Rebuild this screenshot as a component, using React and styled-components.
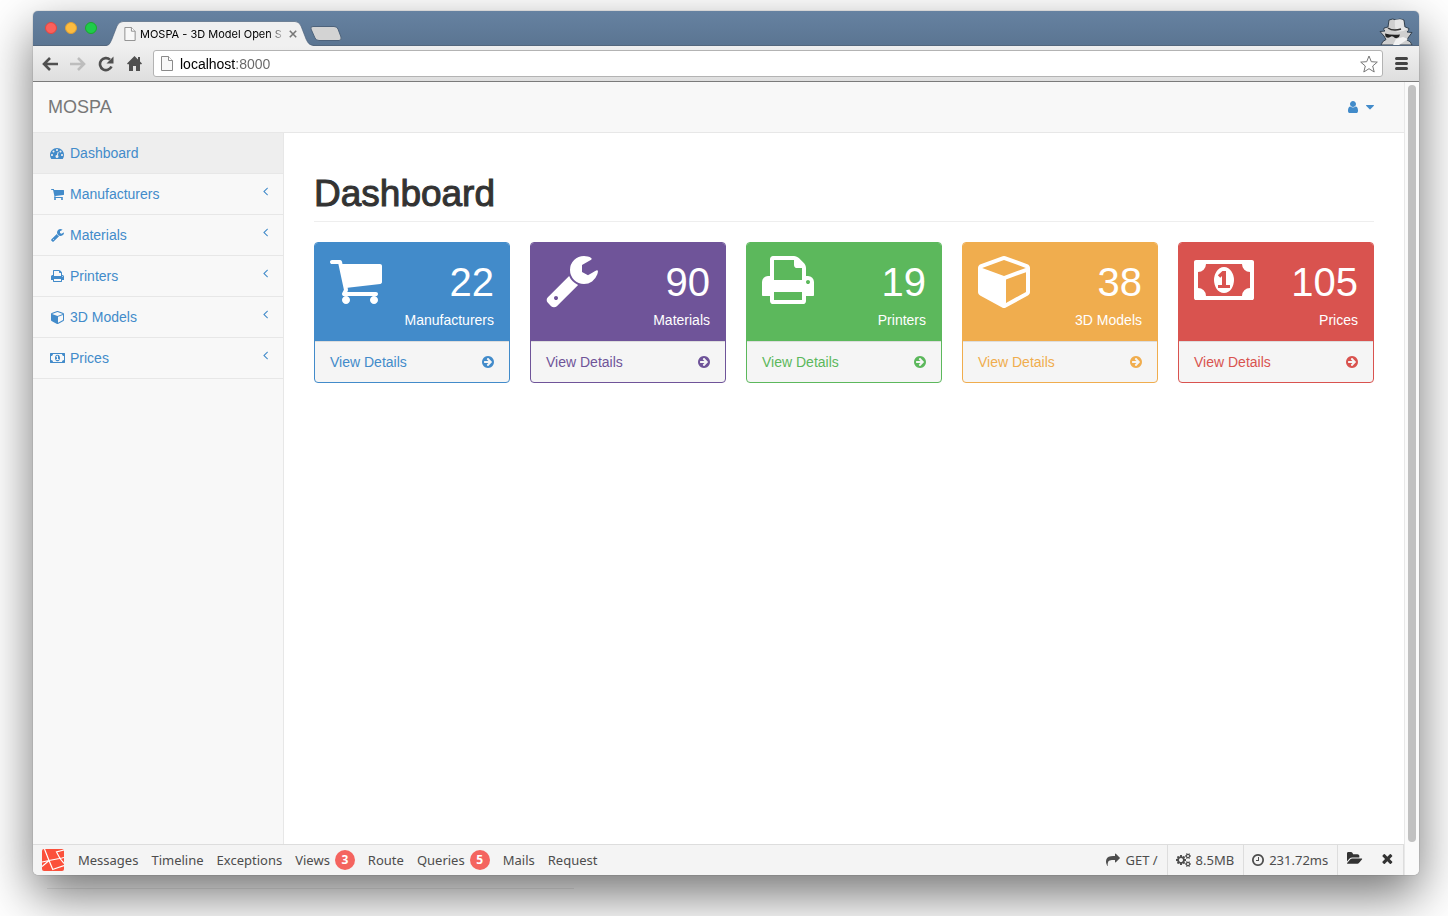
import React from "react";
import styled, { createGlobalStyle } from "styled-components";

const sans = '"Liberation Sans", Arial, sans-serif';
const blue = "#428bca";

const GlobalStyle = createGlobalStyle`
  *, *::before, *::after { box-sizing: border-box; }
  body { margin: 0; background: #fff; color: #333; font: 14px/20px ${sans}; overflow: hidden; }
  a { text-decoration: none; color: inherit; }
  button { border: 0; padding: 0; margin: 0; background: none; font: inherit; color: inherit; cursor: pointer; }
  svg { display: block; flex: none; }
`;

// Each glyph: left edge and advance width in a 1792-unit em, then its outline.
const GLYPHS = {
  cart: [64, 1664, "M704 1536q0 52-38 90t-90 38-90-38-38-90 38-90 90-38 90 38 38 90zm896 0q0 52-38 90t-90 38-90-38-38-90 38-90 90-38 90 38 38 90zm128-1088v512q0 24-16.5 42.5t-40.5 21.5l-1044 122q13 60 13 70 0 16-24 64h920q26 0 45 19t19 45-19 45-45 19h-1024q-26 0-45-19t-19-45q0-11 8-31.5t16-36 21.5-40 15.5-29.5l-177-823h-204q-26 0-45-19t-19-45 19-45 45-19h256q16 0 28.5 6.5t19.5 15.5 13 24.5 8 26 5.5 29.5 4.5 26h1201q26 0 45 19t19 45z"],
  wrench: [64, 1664, "M448 1472q0-26-19-45t-45-19-45 19-19 45 19 45 45 19 45-19 19-45zm644-420l-682 682q-37 37-90 37-52 0-91-37l-106-108q-38-36-38-90 0-53 38-91l681-681q39 98 114.5 173.5t173.5 114.5zm634-435q0 39-23 106-47 134-164.5 217.5t-258.5 83.5q-185 0-316.5-131.5t-131.5-316.5 131.5-316.5 316.5-131.5q58 0 121.5 16.5t107.5 46.5q16 11 16 28t-16 28l-293 169v224l193 107q5-3 79-48.5t135.5-81 70.5-35.5q15 0 23.5 10t8.5 25z"],
  print: [64, 1664, "M448 1536h896v-256h-896v256zm0-640h896v-384h-160q-40 0-68-28t-28-68v-160h-640v640zm1152 64q0-26-19-45t-45-19-45 19-19 45 19 45 45 19 45-19 19-45zm128 0v416q0 13-9.5 22.5t-22.5 9.5h-224v160q0 40-28 68t-68 28h-960q-40 0-68-28t-28-68v-160h-224q-13 0-22.5-9.5t-9.5-22.5v-416q0-79 56.5-135.5t135.5-56.5h64v-544q0-40 28-68t68-28h672q40 0 88 20t76 48l152 152q28 28 48 76t20 88v256h64q79 0 135.5 56.5t56.5 135.5z"],
  cube: [64, 1664, "M960 1629l640-349v-636l-640 233v752zm-64-865l698-254-698-254-698 254zm832-252v768q0 35-18 65t-49 47l-704 384q-28 16-61 16t-61-16l-704-384q-31-17-49-47t-18-65v-768q0-40 23-73t61-47l704-256q22-8 44-8t44 8l704 256q38 14 61 47t23 73z"],
  money: [0, 1920, "M768 1152h384v-96h-128v-448h-114l-148 137 77 80q42-37 55-57h2v288h-128v96zm512-256q0 70-21 142t-59.5 134-101.5 101-138 39-138-39-101.5-101-59.5-134-21-142 21-142 59.5-134 101.5-101 138-39 138 39 101.5 101 59.5 134 21 142zm512 256v-512q-106 0-181-75t-75-181h-1152q0 106-75 181t-181 75v512q106 0 181 75t75 181h1152q0-106 75-181t181-75zm128-832v1152q0 26-19 45t-45 19h-1792q-26 0-45-19t-19-45v-1152q0-26 19-45t45-19h1792q26 0 45 19t19 45z"],
  gauge: [0, 1792, "M384 1152q0-53-37.5-90.5t-90.5-37.5-90.5 37.5-37.5 90.5 37.5 90.5 90.5 37.5 90.5-37.5 37.5-90.5zm192-448q0-53-37.5-90.5t-90.5-37.5-90.5 37.5-37.5 90.5 37.5 90.5 90.5 37.5 90.5-37.5 37.5-90.5zm428 481l101-382q6-26-7.5-48.5t-38.5-29.5-48 6.5-30 39.5l-101 382q-60 5-107 43.5t-63 98.5q-20 77 20 146t117 89 146-20 89-117q16-60-6-117t-72-91zm660-33q0-53-37.5-90.5t-90.5-37.5-90.5 37.5-37.5 90.5 37.5 90.5 90.5 37.5 90.5-37.5 37.5-90.5zm-640-640q0-53-37.5-90.5t-90.5-37.5-90.5 37.5-37.5 90.5 37.5 90.5 90.5 37.5 90.5-37.5 37.5-90.5zm448 192q0-53-37.5-90.5t-90.5-37.5-90.5 37.5-37.5 90.5 37.5 90.5 90.5 37.5 90.5-37.5 37.5-90.5zm320 448q0 261-141 483-19 29-54 29h-1402q-35 0-54-29-141-221-141-483 0-182 71-348t191-286 286-191 348-71 348 71 286 191 191 286 71 348z"],
  user: [256, 1280, "M1536 1399q0 109-62.5 187t-150.5 78h-854q-88 0-150.5-78t-62.5-187q0-85 8.5-160.5t31.5-152 58.5-131 94-89 134.5-34.5q131 128 313 128t313-128q76 0 134.5 34.5t94 89 58.5 131 31.5 152 8.5 160.5zm-256-887q0 159-112.5 271.5t-271.5 112.5-271.5-112.5-112.5-271.5 112.5-271.5 271.5-112.5 271.5 112.5 112.5 271.5z"],
  caret: [384, 1024, "M1408 704q0 26-19 45l-448 448q-19 19-45 19t-45-19l-448-448q-19-19-19-45t19-45 45-19h896q26 0 45 19t19 45z"],
  angle: [576, 640, "M1203 544q0 13-10 23l-393 393 393 393q10 10 10 23t-10 23l-50 50q-10 10-23 10t-23-10l-466-466q-10-10-10-23t10-23l466-466q10-10 23-10t23 10l50 50q10 10 10 23z"],
  arrow: [128, 1536, "M1413 896q0-27-18-45l-91-91-362-362q-18-18-45-18t-45 18l-91 91q-18 18-18 45t18 45l189 189h-502q-26 0-45 19t-19 45v128q0 26 19 45t45 19h502l-189 189q-18 18-18 45t18 45l91 91q18 18 45 18t45-18l362-362 91-91q18-18 18-45zm251 0q0 209-103 385.5t-279.5 279.5-385.5 103-385.5-103-279.5-279.5-103-385.5 103-385.5 279.5-279.5 385.5-103 385.5 103 279.5 279.5 103 385.5z"],
  share: [0, 1792, "M1792 640q0 26-19 45l-512 512q-19 19-45 19t-45-19-19-45v-256h-224q-98 0-175.5 6t-154 21.5-133 42.5-105.5 69.5-80 101-48.5 138.5-17.5 181q0 55 5 123 0 6 2.5 23.5t2.5 26.5q0 15-8.5 25t-23.5 10q-16 0-28-17-7-9-13-22t-13.5-30-10.5-24q-127-285-127-451 0-199 53-333 162-403 875-403h224v-256q0-26 19-45t45-19 45 19l512 512q19 19 19 45z"],
  cogs: [0, 1920, "M896 896q0-106-75-181t-181-75-181 75-75 181 75 181 181 75 181-75 75-181zm768 512q0-52-38-90t-90-38-90 38-38 90q0 53 37.5 90.5t90.5 37.5 90.5-37.5 37.5-90.5zm0-1024q0-52-38-90t-90-38-90 38-38 90q0 53 37.5 90.5t90.5 37.5 90.5-37.5 37.5-90.5zm-384 421v185q0 10-7 19.5t-16 10.5l-155 24q-11 35-32 76 34 48 90 115 7 11 7 20 0 12-7 19-23 30-82.5 89.5t-78.5 59.5q-11 0-21-7l-115-90q-37 19-77 31-11 108-23 155-7 24-30 24h-186q-11 0-20-7.5t-10-17.5l-23-153q-34-10-75-31l-118 89q-7 7-20 7-11 0-21-8-144-133-144-160 0-9 7-19 10-14 41-53t47-61q-23-44-35-82l-152-24q-10-1-17-9.5t-7-19.5v-185q0-10 7-19.5t16-10.5l155-24q11-35 32-76-34-48-90-115-7-11-7-20 0-12 7-20 22-30 82-89t79-59q11 0 21 7l115 90q34-18 77-32 11-108 23-154 7-24 30-24h186q11 0 20 7.5t10 17.5l23 153q34 10 75 31l118-89q8-7 20-7 11 0 21 8 144 133 144 160 0 8-7 19-12 16-42 54t-45 60q23 48 34 82l152 23q10 2 17 10.5t7 19.5zm640 533v140q0 16-149 31-12 27-30 52 51 113 51 138 0 4-4 7-122 71-124 71-8 0-46-47t-52-68q-20 2-30 2t-30-2q-14 21-52 68t-46 47q-2 0-124-71-4-3-4-7 0-25 51-138-18-25-30-52-149-15-149-31v-140q0-16 149-31 13-29 30-52-51-113-51-138 0-4 4-7 4-2 35-20t59-34 30-16q8 0 46 46.500t52 67.500q20-2 30-2t30 2q51-71 92-112l6-2q4 0 124 70 4 3 4 7 0 25-51 138 17 23 30 52 149 15 149 31zm0-1024v140q0 16-149 31-12 27-30 52 51 113 51 138 0 4-4 7-122 71-124 71-8 0-46-47t-52-68q-20 2-30 2t-30-2q-14 21-52 68t-46 47q-2 0-124-71-4-3-4-7 0-25 51-138-18-25-30-52-149-15-149-31v-140q0-16 149-31 13-29 30-52-51-113-51-138 0-4 4-7 4-2 35-20t59-34 30-16q8 0 46 46.500t52 67.500q20-2 30-2t30 2q51-71 92-112l6-2q4 0 124 70 4 3 4 7 0 25-51 138 17 23 30 52 149 15 149 31z"],
  clock: [128, 1536, "M1024 544v448q0 14-9 23t-23 9h-320q-14 0-23-9t-9-23v-64q0-14 9-23t23-9h224v-352q0-14 9-23t23-9h64q14 0 23 9t9 23zm416 352q0-148-73-273t-198-198-273-73-273 73-198 198-73 273 73 273 198 198 273 73 273-73 198-198 73-273zm224 0q0 209-103 385.5t-279.5 279.5-385.5 103-385.5-103-279.5-279.5-103-385.5 103-385.5 279.5-279.5 385.5-103 385.5 103 279.5 279.5 103 385.5z"],
  folder: [0, 1920, "M1815 952q0 31-31 66l-336 396q-43 51-120.5 86.5t-143.5 35.5h-1088q-34 0-60.5-13t-26.5-43q0-31 31-66l336-396q43-51 120.5-86.5t143.5-35.5h1088q34 0 60.5 13t26.5 43zm-343-344v160h-832q-94 0-197 47.5t-164 119.5l-337 396-5 6q0-4-.5-12.5t-.5-12.5v-960q0-92 66-158t158-66h320q92 0 158 66t66 158v32h544q92 0 158 66t66 158z"],
  times: [256, 1280, "M1490 1322q0 40-28 68l-136 136q-28 28-68 28t-68-28l-294-294-294 294q-28 28-68 28t-68-28l-136-136q-28-28-28-68t28-68l294-294-294-294q-28-28-28-68t28-68l136-136q28-28 68-28t68 28l294 294 294-294q28-28 68-28t68 28l136 136q28 28 28 68t-28 68l-294 294 294 294q28 28 28 68z"],
};

function Glyph({ name, size = 14 }) {
  const [left, width, path] = GLYPHS[name];
  return (
    <svg width={(size * width) / 1792} height={size} viewBox={`${left} 0 ${width} 1792`} fill="currentColor" aria-hidden="true">
      <path d={path} />
    </svg>
  );
}

const Desktop = styled.div`
  min-height: 100vh;
  padding: 11px 29px 0 33px;
  background: #fff;
`;
const BrowserWindow = styled.div`
  display: flex;
  flex-direction: column;
  height: calc(100vh - 52px);
  border-radius: 5px;
  overflow: hidden;
  background: #f8f8f8;
  box-shadow: 0 0 1px rgba(0, 0, 0, 0.6), 0 20px 50px rgba(0, 0, 0, 0.55);
`;
const PageRule = styled.hr`
  width: 38%;
  height: 1px;
  border: 0;
  margin: 13px 0 0 14px;
  background: rgba(0, 0, 0, 0.07);
`;

const TabStrip = styled.div`
  display: flex;
  align-items: flex-end;
  height: 35px;
  padding: 0 6px 0 12px;
  background: linear-gradient(#6682a1, #5b7592);
  border-bottom: 1px solid #54677d;
`;
const Lights = styled.div`
  display: flex;
  gap: 8px;
  align-self: center;
  margin-right: 9px;
`;
const Light = styled.button.attrs({ type: "button" })`
  width: 12px;
  height: 12px;
  border-radius: 50%;
  background: ${(p) => p.$color};
  border: 1px solid ${(p) => p.$edge};
`;
const Tab = styled.div`
  position: relative;
  display: flex;
  align-items: center;
  width: 208px;
  height: 25px;
  margin: 0 -3px -1px 0;
  padding: 0 17px 0 18px;
  color: #000;
  font: 11px/16px Inter, sans-serif;
`;
const TabShape = styled.svg`
  position: absolute;
  inset: 0;
`;
const TabTitle = styled.span`
  position: relative;
  flex: 1;
  min-width: 0;
  margin: 0 3px 0 4px;
  white-space: nowrap;
  mask-image: linear-gradient(to right, #000 88%, transparent 100%);
`;
const TabIcon = styled.span`
  position: relative;
`;
const TabClose = styled.button.attrs({ type: "button" })`
  position: relative;
  color: #777;
`;
const Incognito = styled.div`
  margin-left: auto;
`;

const Toolbar = styled.div`
  display: flex;
  align-items: center;
  height: 36px;
  padding: 0 11px 0 3px;
  background: linear-gradient(#f0f0f0, #dedede);
  border-bottom: 1px solid #7b7b7b;
`;
const ToolButton = styled.button.attrs({ type: "button" })`
  display: flex;
  justify-content: center;
  width: 28px;
  color: ${(p) => (p.$faded ? "#bdbdbd" : "#505050")};
`;
const Menu = styled(ToolButton)`
  width: 14px;
  margin-left: 11px;
`;
const Omnibox = styled.label`
  display: flex;
  flex: 1;
  align-items: center;
  gap: 7px;
  height: 27px;
  margin-left: 5px;
  padding: 0 4px 0 7px;
  background: #fff;
  border: 1px solid #b3b3b3;
  border-radius: 3px;
`;
const Address = styled.input`
  flex: 1;
  min-width: 0;
  border: 0;
  padding: 0;
  outline: 0;
  font: 14px/20px ${sans};
  color: transparent;
  background: linear-gradient(to right, #000 56px, #666 56px);
  background-clip: text;
`;

const Viewport = styled.div`
  display: flex;
  flex: 1;
  min-height: 0;
`;
const Page = styled.div`
  display: flex;
  flex: 1;
  flex-direction: column;
  min-width: 0;
`;
const Scrollbar = styled.div`
  width: 15px;
  padding: 3px 3px 33px;
  background: #fafafa;
  border-left: 1px solid #e8e8e8;
`;
const Thumb = styled.div`
  width: 8px;
  height: 100%;
  border-radius: 4px;
  background: #c1c1c1;
`;

const Navbar = styled.header`
  display: flex;
  align-items: center;
  justify-content: space-between;
  height: 51px;
  padding: 0 30px 0 15px;
  background: #f8f8f8;
  border-bottom: 1px solid #e7e7e7;
`;
const Brand = styled.a`
  color: #777;
  font-size: 18px;
`;
const UserMenu = styled.button.attrs({ type: "button" })`
  display: flex;
  gap: 8px;
  color: ${blue};
`;
const Body = styled.div`
  display: flex;
  flex: 1;
  min-height: 0;
`;
const Sidebar = styled.nav`
  width: 251px;
  background: #f8f8f8;
  border-right: 1px solid #e7e7e7;
`;
const SideLink = styled.a`
  display: flex;
  align-items: center;
  height: 41px;
  padding: 0 15px;
  color: ${blue};
  background: ${(p) => (p.$active ? "#eee" : "none")};
  border-bottom: 1px solid #e7e7e7;
`;
const SideIcon = styled.span`
  display: flex;
  justify-content: center;
  width: 18px;
  margin-right: 4px;
`;
const Chevron = styled.span`
  margin: 0 0 6px auto;
`;

const Main = styled.main`
  flex: 1;
  min-width: 0;
  padding: 41px 30px 0;
  background: #fff;
`;
const Title = styled.h1`
  margin: 0 0 20px;
  padding-bottom: 7px;
  border-bottom: 1px solid #eee;
  font-size: 37px;
  line-height: 40px;
  font-weight: 400;
  -webkit-text-stroke: 1px #333;
`;
const Cards = styled.div`
  display: grid;
  grid-template-columns: repeat(5, 1fr);
  gap: 20px;
`;
const Card = styled.section`
  color: ${(p) => p.$color};
  background: #f5f5f5;
  border: 1px solid;
  border-radius: 4px;
  overflow: hidden;
`;
const CardTop = styled.div`
  display: flex;
  justify-content: space-between;
  height: 98px;
  padding: 9px 15px;
  background: ${(p) => p.$color};
`;
const CardFigures = styled.div`
  color: #fff;
  text-align: right;
`;
const CardIcon = styled.div`
  color: #fff;
`;
const Count = styled.div`
  padding-top: 8px;
  font-size: 40px;
  line-height: 44px;
`;
const Label = styled.div`
  padding-top: 6px;
`;
const Details = styled.a`
  display: flex;
  align-items: center;
  justify-content: space-between;
  height: 41px;
  padding: 0 15px;
  border-top: 1px solid #ddd;
`;

const DebugBar = styled.footer`
  display: flex;
  align-items: stretch;
  gap: 1px;
  height: 31px;
  padding: 0 0 0 9px;
  background: #f4f4f4;
  border-top: 1px solid #ddd;
  color: #4d4d4d;
  font: 13px/20px "Noto Sans", sans-serif;
`;
const Logo = styled.div`
  align-self: center;
  margin-right: 7px;
`;
const DebugTab = styled.button.attrs({ type: "button" })`
  display: flex;
  align-items: center;
  gap: 5px;
  padding: 0 6px;
`;
const Badge = styled.span`
  width: 20px;
  border-radius: 10px;
  background: #f4645f;
  color: #fff;
  font-weight: 700;
  font-size: 12px;
  text-align: center;
`;
const Stat = styled.span`
  display: flex;
  align-items: center;
  gap: 5px;
  padding: 0 9px 0 8px;
  border-right: 1px solid #ddd;
`;
const Stats = styled.div`
  display: flex;
  margin-left: auto;
`;
const DebugActions = styled.div`
  display: flex;
  align-items: center;
  gap: 19px;
  padding: 0 10px 4px 9px;
  border-right: 1px solid #ddd;
  color: #333;
`;

const PageIcon = ({ size = 15 }) => (
  <svg width="12" height={size} viewBox="0 0 12 15" fill="#f8f8f8" stroke="#8a8a8a">
    <path d="M.5 .5h7l4 4v10H.5z" />
    <path d="M7.5 .5v4h4" fill="#fff" />
  </svg>
);

const SECTIONS = [
  ["Manufacturers", "cart", 22, "#428bca"],
  ["Materials", "wrench", 90, "#6f5499"],
  ["Printers", "print", 19, "#5cb85c"],
  ["3D Models", "cube", 38, "#f0ad4e"],
  ["Prices", "money", 105, "#d9534f"],
];
const DEBUG_TABS = [
  ["Messages"], ["Timeline"], ["Exceptions"], ["Views", 3], ["Route"], ["Queries", 5], ["Mails"], ["Request"],
];

export default function App() {
  return (
    <Desktop>
      <GlobalStyle />
      <BrowserWindow>
        <TabStrip>
          <Lights>
            <Light $color="#fc605b" $edge="#e2463f" aria-label="Close window" />
            <Light $color="#fdbc40" $edge="#e0a032" aria-label="Minimize window" />
            <Light $color="#1fcb4b" $edge="#1aab29" aria-label="Zoom window" />
          </Lights>
          <Tab>
            <TabShape width="208" height="25" viewBox="0 0 208 25">
              <path d="M0 25C4 24 4 22 6 18L11 5Q13 .5 17 .5H189Q193 .5 195 5L200 18C202 22 203 24 208 25Z" fill="#f0f0f0" />
              <path d="M0 24.5C4 24 4 22 6 18L11 5Q13 .5 17 .5H189Q193 .5 195 5L200 18C202 22 203 24 208 24.5" fill="none" stroke="#495e77" strokeOpacity=".6" />
            </TabShape>
            <TabIcon><PageIcon size={14} /></TabIcon>
            <TabTitle>MOSPA - 3D Model Open S</TabTitle>
            <TabClose aria-label="Close tab">
              <svg width="8" height="8" viewBox="0 0 8 8" stroke="currentColor" strokeWidth="1.6"><path d="M.8 .8l6.4 6.4M7.2 .8L.8 7.2" /></svg>
            </TabClose>
          </Tab>
          <ToolButton aria-label="New tab">
            <svg width="33" height="24" viewBox="0 0 33 24">
              <path d="M4 5.5H25Q28 5.5 29 8L32 16Q33 19.500 30 19.500H10Q7 19.500 6 17L2 8Q1 5.500 4 5.500Z" fill="#d3d3d3" stroke="#4d627b" />
            </svg>
          </ToolButton>
          <Incognito>
            <svg width="34" height="28" viewBox="0 0 34 28">
              <path d="M2 28Q3 24 7 22.500L5 19L1 14.500L6 14Q4 13 5 11L9 10L10 3Q14 1 17 3Q21 1 25 3L26 10L30 11.500Q30 13.500 28 15L33 15.500L29 21L28 23Q32 24 33 28Z" fill="#cfcfcf" stroke="#33414f" />
              <path d="M16 3Q21 1.500 24 3L25 10L29 12Q24 15 18 15Q15 10 16 3Z" fill="#e6e6e6" />
              <path d="M9 11Q14 14.500 22 12" stroke="#333" strokeWidth="1.500" fill="none" />
              <path d="M6 16.500Q13 18.500 21 17.500L20 20Q17 22.500 14 19.500L12.500 19.300Q9 22 6.500 19.500Z" fill="#222" />
              <path d="M14 28L17 22L24 20L29 22L20 28Z" fill="#f2f2f2" />
            </svg>
          </Incognito>
        </TabStrip>
        <Toolbar>
          <ToolButton aria-label="Back">
            <svg width="16" height="14" viewBox="0 0 16 14" fill="none" stroke="currentColor" strokeWidth="2.6"><path d="M8 1L2 7l6 6M2 7h14" /></svg>
          </ToolButton>
          <ToolButton $faded aria-label="Forward">
            <svg width="16" height="14" viewBox="0 0 16 14" fill="none" stroke="currentColor" strokeWidth="2.6"><path d="M8 1l6 6-6 6M14 7H0" /></svg>
          </ToolButton>
          <ToolButton aria-label="Reload">
            <svg width="16" height="16" viewBox="0 0 16 16" fill="none" stroke="currentColor" strokeWidth="2.6"><path d="M13.5 10.500A6 6 0 1 1 12 3.600" /><path d="M15.500 .5v7h-7z" fill="currentColor" stroke="none" /></svg>
          </ToolButton>
          <ToolButton aria-label="Home">
            <svg width="15" height="15" viewBox="0 0 15 15" fill="currentColor"><path d="M7.500 0L0 7.500l1 1L2 8v7h4v-5h3v5h4V8l1 .5 1-1-2-2V1h-2v2.500z" /></svg>
          </ToolButton>
          <Omnibox>
            <PageIcon />
            <Address aria-label="Address" defaultValue="localhost:8000" spellCheck={false} />
            <svg width="18" height="18" viewBox="0 0 18 18" fill="#fff" stroke="#777" strokeLinejoin="round"><path d="M9 1l2.300 5.700 6 .4-4.600 3.900 1.500 6L9 13.700 3.800 17l1.500-6L.7 7.100l6-.4z" /></svg>
          </Omnibox>
          <Menu aria-label="Browser menu">
            <svg width="13" height="13" viewBox="0 0 13 13" stroke="#444" strokeWidth="3" strokeLinecap="round"><path d="M1.500 1.500h10M1.500 6.500h10M1.500 11.500h10" /></svg>
          </Menu>
        </Toolbar>
        <Viewport>
          <Page>
            <Navbar>
              <Brand href="#">MOSPA</Brand>
              <UserMenu aria-label="Account">
                <Glyph name="user" />
                <Glyph name="caret" />
              </UserMenu>
            </Navbar>
            <Body>
              <Sidebar>
                <SideLink href="#" $active>
                  <SideIcon><Glyph name="gauge" /></SideIcon>
                  Dashboard
                </SideLink>
                {SECTIONS.map(([label, icon]) => (
                  <SideLink href="#" key={label}>
                    <SideIcon><Glyph name={icon} /></SideIcon>
                    {label}
                    <Chevron><Glyph name="angle" /></Chevron>
                  </SideLink>
                ))}
              </Sidebar>
              <Main>
                <Title>Dashboard</Title>
                <Cards>
                  {SECTIONS.map(([label, icon, count, color]) => (
                    <Card key={label} $color={color}>
                      <CardTop $color={color}>
                        <CardIcon><Glyph name={icon} size={56} /></CardIcon>
                        <CardFigures>
                          <Count>{count}</Count>
                          <Label>{label}</Label>
                        </CardFigures>
                      </CardTop>
                      <Details href="#">
                        View Details
                        <Glyph name="arrow" />
                      </Details>
                    </Card>
                  ))}
                </Cards>
              </Main>
            </Body>
            <DebugBar>
              <Logo>
                <svg width="22" height="22" viewBox="0 0 22 22">
                  <rect width="22" height="22" rx="2" fill="#fb503b" />
                  <path d="M2.500 0L7 11.500L11 21M0 13L7 11.500L20 9L22 8.500M22 1L14.500 3L18 9.500L22 14.500M0 17.500L7 11.500M10.500 20.500L22 16.500" fill="none" stroke="#fff" strokeWidth="1.200" />
                </svg>
              </Logo>
              {DEBUG_TABS.map(([label, count]) => (
                <DebugTab key={label}>
                  {label}
                  {count && <Badge>{count}</Badge>}
                </DebugTab>
              ))}
              <Stats>
                <Stat><Glyph name="share" />GET /</Stat>
                <Stat><Glyph name="cogs" />8.5MB</Stat>
                <Stat><Glyph name="clock" />231.72ms</Stat>
                <DebugActions>
                  <button type="button" aria-label="Open"><Glyph name="folder" size={15} /></button>
                  <button type="button" aria-label="Close"><Glyph name="times" size={15} /></button>
                </DebugActions>
              </Stats>
            </DebugBar>
          </Page>
          <Scrollbar><Thumb /></Scrollbar>
        </Viewport>
      </BrowserWindow>
      <PageRule />
    </Desktop>
  );
}
